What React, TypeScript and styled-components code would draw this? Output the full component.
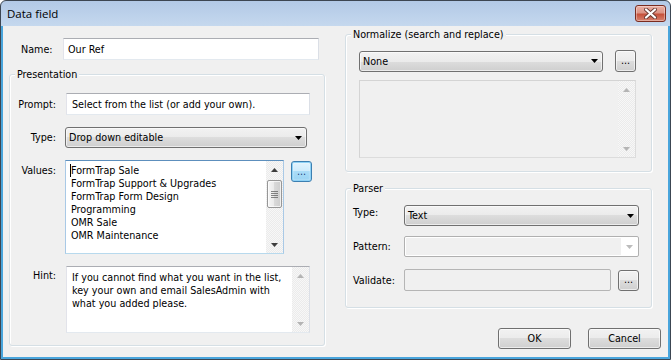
import React from "react";
import styled, { createGlobalStyle } from "styled-components";

const UI_FONT = `"DejaVu Sans Condensed", "DejaVu Sans", sans-serif`;

const GlobalStyle = createGlobalStyle`
  html, body { margin: 0; padding: 0; background: #ffffff; }
  * { box-sizing: border-box; }
`;

const Window = styled.div`
  width: 671px;
  height: 360px;
  display: flex;
  flex-direction: column;
  border: 1px solid #3c4652;
  border-radius: 6px 6px 0 0;
  background: linear-gradient(#b2c9e6, #c5d8ee 25px, #c5d8ee);
  overflow: hidden;
  font-family: ${UI_FONT};
  font-size: 10.7px;
  line-height: 13px;
  color: #000;
`;

const TitleBar = styled.div`
  height: 25px;
  flex: none;
  display: flex;
  align-items: flex-start;
  justify-content: space-between;
  padding: 0 4px 0 6px;
`;

const TitleText = styled.span`
  font-family: "Open Sans", "Noto Sans", sans-serif;
  font-size: 11.5px;
  line-height: 25px;
  color: #000;
`;

const CloseButton = styled.div`
  margin-top: 4px;
  width: 31px;
  height: 17px;
  border: 1px solid #7a2c20;
  border-radius: 3px;
  background: linear-gradient(#ebafa3 0%, #dc9485 45%, #c6513a 55%, #d7826f 100%);
  box-shadow: inset 0 0 0 1px rgba(255, 255, 255, 0.35);
  display: flex;
  align-items: center;
  justify-content: center;
`;

const Client = styled.div`
  flex: 1;
  display: flex;
  gap: 20px;
  padding: 0 7px 0 6px;
  background: #f0f0f0;
  border: 2px solid #49a5dc;
  border-top: 0;
`;

const Column = styled.div<{ $pt: number }>`
  width: 316px;
  flex: none;
  display: flex;
  flex-direction: column;
  padding-top: ${(p) => p.$pt}px;
`;

const NameRow = styled.div`
  display: flex;
  align-items: center;
  height: 22px;
  padding-left: 12px;
`;

const NameLabel = styled.span`
  width: 42px;
  flex: none;
`;

const GroupBox = styled.div<{ $mt: number; $w: number; $pad: string }>`
  position: relative;
  width: ${(p) => p.$w}px;
  margin-top: ${(p) => p.$mt}px;
  padding: ${(p) => p.$pad};
  border: 1px solid #d5dfe5;
  border-radius: 3px;
  box-shadow: inset 1px 1px 0 #ffffff, 1px 1px 0 #ffffff;
`;

const Caption = styled.span`
  position: absolute;
  top: -7px;
  left: 5px;
  padding: 0 2px;
  background: #f0f0f0;
  line-height: 13px;
`;

const FieldRow = styled.div<{ $mt?: number; $align?: string }>`
  display: flex;
  align-items: ${(p) => p.$align ?? "center"};
  margin-top: ${(p) => p.$mt ?? 0}px;
`;

const RightLabel = styled.span<{ $pt?: number }>`
  width: 46px;
  flex: none;
  text-align: right;
  margin-right: 10px;
  padding-top: ${(p) => p.$pt ?? 0}px;
`;

const LeftLabel = styled.span<{ $pb?: number }>`
  width: 51px;
  flex: none;
  padding-bottom: ${(p) => p.$pb ?? 0}px;
`;

const TextBox = styled.div<{ $w: number; $h: number; $pl?: number }>`
  width: ${(p) => p.$w}px;
  height: ${(p) => p.$h}px;
  flex: none;
  display: flex;
  align-items: center;
  padding-left: ${(p) => p.$pl ?? 4}px;
  background: #ffffff;
  border: 1px solid;
  border-color: #abadb3 #dbdfe6 #e3e9ef #e2e3ea;
  white-space: nowrap;
`;

const DisabledBox = styled.div<{ $w: number; $h: number }>`
  width: ${(p) => p.$w}px;
  height: ${(p) => p.$h}px;
  flex: none;
  background: #f0f0f0;
  border: 1px solid #b5b5b5;
  border-radius: 2px;
`;

const DropDown = styled.div<{ $w: number; $ml?: number }>`
  width: ${(p) => p.$w}px;
  height: 21px;
  flex: none;
  margin-left: ${(p) => p.$ml ?? 0}px;
  display: flex;
  align-items: center;
  justify-content: space-between;
  padding: 0 4px 0 3px;
  border: 1px solid #707070;
  border-radius: 3px;
  background: linear-gradient(#f2f2f2, #ebebeb 50%, #dddddd 50%, #cfcfcf);
  box-shadow: inset 0 0 0 1px rgba(255, 255, 255, 0.6);
  white-space: nowrap;
`;

const DisabledCombo = styled.div<{ $w: number }>`
  width: ${(p) => p.$w}px;
  height: 21px;
  flex: none;
  display: flex;
  padding: 1px 0 1px 1px;
  background: #ffffff;
  border: 1px solid #b0b0b0;
  border-radius: 2px;
`;

const ComboField = styled.div`
  flex: 1;
  background: #f0f0f0;
`;

const ComboArrow = styled.div`
  width: 17px;
  flex: none;
  display: flex;
  align-items: center;
  justify-content: center;
`;

const ListBox = styled.div<{ $w: number; $h: number; $ml?: number; $tone: "focus" | "normal" | "disabled" }>`
  width: ${(p) => p.$w}px;
  height: ${(p) => p.$h}px;
  flex: none;
  margin-left: ${(p) => p.$ml ?? 0}px;
  display: flex;
  border: 1px solid;
  border-color: ${(p) =>
    p.$tone === "focus"
      ? "#5d8fbd #a9c9e6 #b7d9ed #a9c9e6"
      : p.$tone === "normal"
      ? "#abadb3 #dbdfe6 #e3e9ef #e2e3ea"
      : "#d4d4d4 #dcdcdc #dcdcdc #d4d4d4"};
  background: ${(p) => (p.$tone === "disabled" ? "#f0f0f0" : "#ffffff")};
`;

const ListText = styled.div<{ $pt: number; $pl: number }>`
  flex: 1;
  padding: ${(p) => p.$pt}px 0 0 ${(p) => p.$pl}px;
  white-space: pre-line;
  overflow: hidden;
`;

const Caret = styled.span`
  display: inline-block;
  width: 1px;
  height: 13px;
  margin-left: -1px;
  vertical-align: top;
  background: #000000;
`;

const ScrollBar = styled.div`
  width: 17px;
  flex: none;
  display: flex;
  flex-direction: column;
  background: repeating-conic-gradient(#f7f7f7 0 25%, #ebebeb 0 50%) 0 0 / 2px 2px;
`;

const ScrollArrow = styled.div`
  height: 17px;
  flex: none;
  display: flex;
  align-items: center;
  justify-content: center;
`;

const ScrollTrack = styled.div`
  flex: 1;
  padding-top: 2px;
`;

const ScrollThumb = styled.div`
  margin: 0 1px;
  height: 28px;
  border: 1px solid #979797;
  border-radius: 2px;
  background: linear-gradient(90deg, #f6f6f6, #e9e9e9 50%, #d9d9d9 50%, #cdcdcd);
  box-shadow: inset 0 0 0 1px rgba(255, 255, 255, 0.7);
  display: flex;
  align-items: center;
  justify-content: center;
`;

const MiniButton = styled.div<{ $h: number; $ml: number; $mt?: number; $focus?: boolean }>`
  width: 21px;
  height: ${(p) => p.$h}px;
  flex: none;
  margin-left: ${(p) => p.$ml}px;
  margin-top: ${(p) => p.$mt ?? 0}px;
  display: flex;
  align-items: center;
  justify-content: center;
  border: 1px solid ${(p) => (p.$focus ? "#3c7fb1" : "#707070")};
  border-radius: 3px;
  background: ${(p) =>
    p.$focus
      ? "linear-gradient(#e3f4fd, #cdebfc 50%, #aadcf8 50%, #98d3f4)"
      : "linear-gradient(#f2f2f2, #ebebeb 50%, #dddddd 50%, #cfcfcf)"};
  box-shadow: ${(p) =>
    p.$focus
      ? "inset 0 0 0 1px #8fd2f6, inset 0 0 2px 1px rgba(255,255,255,0.6)"
      : "inset 0 0 0 1px rgba(255,255,255,0.6)"};
  color: ${(p) => (p.$focus ? "#1b3f7a" : "#000000")};
  padding-bottom: 1px;
`;

const ButtonRow = styled.div`
  display: flex;
  justify-content: flex-end;
  gap: 17px;
  margin-top: 20px;
`;

const PushButton = styled.div`
  width: 73px;
  height: 21px;
  display: flex;
  align-items: center;
  justify-content: center;
  border: 1px solid #707070;
  border-radius: 3px;
  background: linear-gradient(#f2f2f2, #ebebeb 50%, #dddddd 50%, #cfcfcf);
  box-shadow: inset 0 0 0 1px rgba(255, 255, 255, 0.6);
`;

const Arrow = ({ dir, color }: { dir: "up" | "down"; color: string }) => (
  <svg width="7" height="4" viewBox="0 0 7 4">
    <polygon points={dir === "up" ? "0,4 3.5,0 7,4" : "0,0 7,0 3.5,4"} fill={color} />
  </svg>
);

const Grip = () => (
  <svg width="7" height="7" viewBox="0 0 7 7">
    {[0, 2, 4, 6].map((y) => (
      <rect key={y} x="0" y={y} width="7" height="1" fill="#5f5f5f" opacity="0.75" />
    ))}
  </svg>
);

const CloseGlyph = () => (
  <svg width="13" height="11" viewBox="0 0 13 11">
    <path d="M2 1.5 L11 9.5 M11 1.5 L2 9.5" stroke="#6b3b33" strokeWidth="4" strokeLinecap="round" />
    <path d="M2 1.5 L11 9.5 M11 1.5 L2 9.5" stroke="#ffffff" strokeWidth="2.2" strokeLinecap="round" />
  </svg>
);

const Scroller = ({ thumb, disabled }: { thumb?: boolean; disabled?: boolean }) => {
  const c = disabled ? "#b4b4b4" : "#3d3d3d";
  return (
    <ScrollBar>
      <ScrollArrow>
        <Arrow dir="up" color={c} />
      </ScrollArrow>
      <ScrollTrack>
        {thumb && (
          <ScrollThumb>
            <Grip />
          </ScrollThumb>
        )}
      </ScrollTrack>
      <ScrollArrow>
        <Arrow dir="down" color={c} />
      </ScrollArrow>
    </ScrollBar>
  );
};

const values = [
  "FormTrap Support & Upgrades",
  "FormTrap Form Design",
  "Programming",
  "OMR Sale",
  "OMR Maintenance",
];

export default function App() {
  return (
    <>
      <GlobalStyle />
      <Window>
        <TitleBar>
          <TitleText>Data field</TitleText>
          <CloseButton>
            <CloseGlyph />
          </CloseButton>
        </TitleBar>
        <Client>
          <Column $pt={12}>
            <NameRow>
              <NameLabel>Name:</NameLabel>
              <TextBox $w={256} $h={22}>Our Ref</TextBox>
            </NameRow>
            <GroupBox $mt={14} $w={316} $pad="18px 0 12px 0">
              <Caption>Presentation</Caption>
              <FieldRow>
                <RightLabel>Prompt:</RightLabel>
                <TextBox $w={244} $h={22} $pl={5}>
                  Select from the list (or add your own).
                </TextBox>
              </FieldRow>
              <FieldRow $mt={12}>
                <RightLabel>Type:</RightLabel>
                <DropDown $w={242} $ml={-1}>
                  <span>Drop down editable</span>
                  <Arrow dir="down" color="#000" />
                </DropDown>
              </FieldRow>
              <FieldRow $mt={12} $align="flex-start">
                <RightLabel $pt={4}>Values:</RightLabel>
                <ListBox $w={219} $h={94} $ml={-1} $tone="focus">
                  <ListText $pt={3} $pl={5}>
                    <Caret />
                    {"FormTrap Sale\n" + values.join("\n")}
                  </ListText>
                  <Scroller thumb />
                </ListBox>
                <MiniButton $h={21} $ml={7} $mt={1} $focus>
                  ...
                </MiniButton>
              </FieldRow>
              <FieldRow $mt={12} $align="flex-start">
                <RightLabel $pt={3}>Hint:</RightLabel>
                <ListBox $w={244} $h={67} $tone="normal">
                  <ListText $pt={4} $pl={5}>
                    {"If you cannot find what you want in the list,\nkey your own and email SalesAdmin with\nwhat you added please."}
                  </ListText>
                  <Scroller disabled />
                </ListBox>
              </FieldRow>
            </GroupBox>
          </Column>
          <Column $pt={8}>
            <GroupBox $mt={0} $w={307} $pad="15px 0 13px 13px">
              <Caption>Normalize (search and replace)</Caption>
              <FieldRow>
                <DropDown $w={244}>
                  <span>None</span>
                  <Arrow dir="down" color="#000" />
                </DropDown>
                <MiniButton $h={22} $ml={12}>
                  ...
                </MiniButton>
              </FieldRow>
              <FieldRow $mt={8}>
                <ListBox $w={277} $h={78} $tone="disabled">
                  <ListText $pt={0} $pl={0} />
                  <Scroller disabled />
                </ListBox>
              </FieldRow>
            </GroupBox>
            <GroupBox $mt={16} $w={307} $pad="16px 12px 16px 7px">
              <Caption>Parser</Caption>
              <FieldRow>
                <LeftLabel $pb={6}>Type:</LeftLabel>
                <DropDown $w={235}>
                  <span>Text</span>
                  <Arrow dir="down" color="#000" />
                </DropDown>
              </FieldRow>
              <FieldRow $mt={10}>
                <LeftLabel>Pattern:</LeftLabel>
                <DisabledCombo $w={235}>
                  <ComboField />
                  <ComboArrow>
                    <Arrow dir="down" color="#bcbcbc" />
                  </ComboArrow>
                </DisabledCombo>
              </FieldRow>
              <FieldRow $mt={12}>
                <LeftLabel>Validate:</LeftLabel>
                <DisabledBox $w={207} $h={22} />
                <MiniButton $h={21} $ml={7}>
                  ...
                </MiniButton>
              </FieldRow>
            </GroupBox>
            <ButtonRow>
              <PushButton>OK</PushButton>
              <PushButton>Cancel</PushButton>
            </ButtonRow>
          </Column>
        </Client>
      </Window>
    </>
  );
}
